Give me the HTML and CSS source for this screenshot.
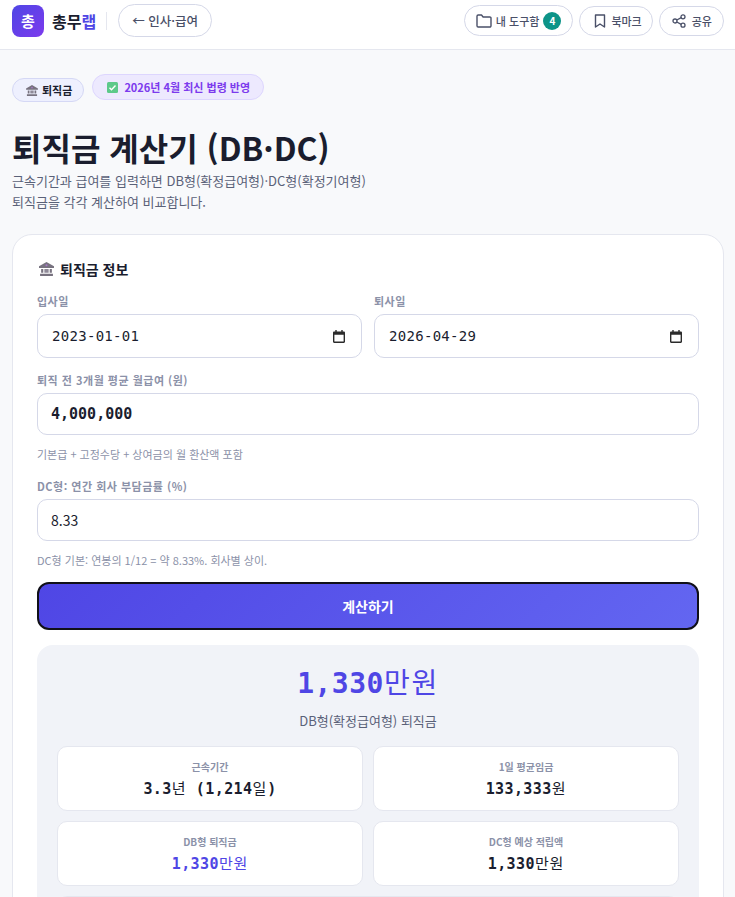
FILE: index.html
```html
<!DOCTYPE html>
<html lang="ko">
<head>
  <meta charset="UTF-8">
  <title>퇴직금 계산기 (DB·DC)</title>
  <meta name="viewport" content="width=device-width, initial-scale=1.0">
  <link rel="stylesheet" href="styles.css">
</head>
<body>

  <header class="topbar">
    <div class="topbar-left">
      <a class="logo-mark" href="#">총</a>
      <a class="logo-text" href="#">총무<span>랩</span></a>
      <span class="topbar-divider"></span>
      <a class="back-pill" href="#">← 인사·급여</a>
    </div>
    <nav class="topbar-right">
      <a class="tool-pill tool-pill-main" href="#">
        <svg width="16" height="14" viewBox="0 0 16 14" fill="none" stroke="currentColor" stroke-width="1.400" stroke-linejoin="round"><path d="M1 2.200A1.200 1.200 0 0 1 2.200 1h3.300l1.600 2h6.700A1.200 1.200 0 0 1 15 4.200v7.600a1.200 1.200 0 0 1-1.200 1.200H2.200A1.200 1.200 0 0 1 1 11.800z"/></svg>
        내 도구함 <span class="count">4</span>
      </a>
      <a class="tool-pill tool-pill-mark" href="#">
        <svg width="12" height="14" viewBox="0 0 12 14" fill="none" stroke="currentColor" stroke-width="1.400" stroke-linejoin="round"><path d="M1.500 1h9v12L6 10l-4.500 3z"/></svg>
        북마크
      </a>
      <a class="tool-pill tool-pill-share" href="#">
        <svg width="14" height="14" viewBox="0 0 14 14" fill="none" stroke="currentColor" stroke-width="1.300"><circle cx="11" cy="2.800" r="2"/><circle cx="3" cy="7" r="2"/><circle cx="11" cy="11.200" r="2"/><path d="M4.800 6l4.400-2.300M4.800 8l4.400 2.300"/></svg>
        공유
      </a>
    </nav>
  </header>

  <main class="page">
    <div class="badges">
      <span class="badge badge-cat">
        <svg width="12" height="11" viewBox="0 0 14 13"><path fill="#77727f" d="M7 0l7 4v1.500H0V4zM1 11h12v2H1zM2 6.500h2V10H2zM10 6.500h2V10h-2z"/><path fill="#8f8a98" d="M5 6.500h4V10H5z"/><circle cx="7" cy="3" r="1" fill="#a678c8"/></svg>
        퇴직금
      </span>
      <span class="badge badge-law">
        <svg width="11" height="11" viewBox="0 0 11 11"><rect width="11" height="11" rx="1.500" fill="#5cc98a"/><path d="M2.500 5.700l2 2 4-4.200" fill="none" stroke="#fff" stroke-width="1.400"/></svg>
        2026년 4월 최신 법령 반영
      </span>
    </div>

    <h1>퇴직금 계산기 (DB·DC)</h1>
    <p class="lead">근속기간과 급여를 입력하면 DB형(확정급여형)·DC형(확정기여형) 퇴직금을 각각 계산하여 비교합니다.</p>

    <section class="card">
      <h2>
        <svg width="15" height="14" viewBox="0 0 14 13"><path fill="#77727f" d="M7 0l7 4v1.500H0V4zM1 11h12v2H1zM2 6.500h2V10H2zM10 6.500h2V10h-2z"/><path fill="#8f8a98" d="M5 6.500h4V10H5z"/><circle cx="7" cy="3" r="1" fill="#a678c8"/></svg>
        퇴직금 정보
      </h2>

      <div class="date-row">
        <div class="field">
          <label for="startDate">입사일</label>
          <div class="input date-box">
            <input type="text" id="startDate" class="date-text" value="2023-01-01">
            <svg width="12" height="13" viewBox="0.500 0 13 14"><path fill="#2b2b2b" d="M3 0h1.500v1.500h5V0H11v1.500h1.200c.7 0 1.300.6 1.300 1.300v9.900c0 .7-.6 1.300-1.300 1.300H1.800C1.100 14 .5 13.400 .5 12.700V2.800c0-.7.6-1.300 1.300-1.300H3zM2 5v7.500h10V5z"/></svg>
          </div>
        </div>
        <div class="field">
          <label for="endDate">퇴사일</label>
          <div class="input date-box">
            <input type="text" id="endDate" class="date-text" value="2026-04-29">
            <svg width="12" height="13" viewBox="0.500 0 13 14"><path fill="#2b2b2b" d="M3 0h1.500v1.500h5V0H11v1.500h1.200c.7 0 1.300.6 1.300 1.300v9.900c0 .7-.6 1.300-1.300 1.300H1.800C1.100 14 .5 13.400 .5 12.700V2.800c0-.7.6-1.300 1.300-1.300H3zM2 5v7.500h10V5z"/></svg>
          </div>
        </div>
      </div>

      <div class="field field-spaced">
        <label for="salary">퇴직 전 3개월 평균 월급여 (원)</label>
        <input type="text" id="salary" class="input input-money" value="4,000,000">
        <p class="hint">기본급 + 고정수당 + 상여금의 월 환산액 포함</p>
      </div>

      <div class="field field-spaced">
        <label for="rate">DC형: 연간 회사 부담금률 (%)</label>
        <input type="text" id="rate" class="input input-rate" value="8.33">
        <p class="hint">DC형 기본: 연봉의 1/12 = 약 8.33%. 회사별 상이.</p>
      </div>

      <button type="button" class="calc-button">계산하기</button>

      <div class="result">
        <div class="result-amount">1,330<span class="unit">만원</span></div>
        <div class="result-label">DB형(확정급여형) 퇴직금</div>
        <div class="stat-grid">
          <div class="stat">
            <div class="stat-label">근속기간</div>
            <div class="stat-value">3.3<span class="unit">년</span> (1,214<span class="unit">일</span>)</div>
          </div>
          <div class="stat">
            <div class="stat-label">1일 평균임금</div>
            <div class="stat-value">133,333<span class="unit">원</span></div>
          </div>
          <div class="stat">
            <div class="stat-label">DB형 퇴직금</div>
            <div class="stat-value stat-accent">1,330<span class="unit">만원</span></div>
          </div>
          <div class="stat">
            <div class="stat-label">DC형 예상 적립액</div>
            <div class="stat-value">1,330<span class="unit">만원</span></div>
          </div>
        </div>
        <div class="stat stat-wide"></div>
      </div>
    </section>
  </main>

</body>
</html>
```

FILE: styles.css
```css
* {
  box-sizing: border-box;
}
html, body {
  height: 100%;
  margin: 0;
  overflow: hidden;
}
body {
  font-family: 'Noto Sans CJK KR', 'Noto Sans', sans-serif;
  background: #f8f9fb;
  color: #1a1d2e;
}
a {
  text-decoration: none;
  color: inherit;
}
.topbar {
  height: 50px;
  padding: 4px 11px 0 12px;
  background: #fff;
  border-bottom: 1px solid #e5e7ef;
  display: flex;
  justify-content: space-between;
  align-items: flex-start;
}
.topbar-left, .topbar-right {
  display: flex;
  align-items: center;
}
.topbar-right {
  gap: 6px;
  margin-top: 1px;
}
.logo-mark {
  width: 32px;
  height: 32px;
  border-radius: 8px;
  background: linear-gradient(135deg, #4f46e5, #7c3aed);
  color: #fff;
  font-size: 15px;
  font-weight: 700;
  display: flex;
  align-items: center;
  justify-content: center;
}
.logo-text {
  margin-left: 8px;
  font-size: 16px;
  font-weight: 700;
}
.logo-text span {
  color: #4f46e5;
}
.topbar-divider {
  width: 1px;
  height: 18px;
  margin: 0 11px 0 10px;
  background: #e5e7ef;
}
.back-pill {
  height: 33px;
  padding: 0 13px;
  border: 1px solid #d5d8e8;
  border-radius: 17px;
  font-size: 12.500px;
  font-weight: 500;
  color: #4a5068;
  display: flex;
  align-items: center;
}
.tool-pill {
  height: 30px;
  padding: 0 12px;
  border: 1px solid #d5d8e8;
  border-radius: 16px;
  font-size: 11px;
  font-weight: 500;
  color: #4a5068;
  display: flex;
  align-items: center;
  gap: 5px;
}
.tool-pill-main {
  height: 31px;
  padding: 0 11px;
  gap: 4px;
}
.tool-pill-mark {
  padding: 0 10px 0 14px;
}
.tool-pill-share {
  padding: 0 11px 0 12px;
  gap: 6px;
}
.count {
  width: 18px;
  height: 18px;
  border-radius: 50%;
  background: #0d9488;
  color: #fff;
  font-size: 10px;
  font-weight: 700;
  display: flex;
  align-items: center;
  justify-content: center;
}
.page {
  padding: 24px 11px 0 12px;
}
.badges {
  display: flex;
  align-items: flex-start;
  gap: 8px;
}
.badge {
  border-radius: 14px;
  font-size: 11px;
  font-weight: 700;
  display: inline-flex;
  align-items: center;
}
.badge-cat {
  height: 24px;
  margin-top: 4px;
  padding: 0 11px 0 13px;
  gap: 4px;
  background: #eef0fe;
  border: 1px solid #d5d8f5;
}
.badge-law {
  height: 26px;
  padding: 0 13px 0 14px;
  gap: 6px;
  background: #ede9fe;
  border: 1px solid #ddd6fe;
  color: #7c3aed;
}
h1 {
  margin: 23px 0 0;
  font-size: 32px;
  line-height: 44px;
  font-weight: 700;
}
.lead {
  width: 370px;
  margin: 1px 0 0;
  font-size: 13px;
  line-height: 21px;
  color: #5a6178;
  word-break: keep-all;
}
.card {
  margin-top: 22px;
  padding: 23px 24px 24px;
  background: #fff;
  border: 1px solid #e5e7ef;
  border-radius: 20px;
}
h2 {
  margin: 0 0 13px 2px;
  font-size: 14px;
  line-height: 22px;
  font-weight: 700;
  display: flex;
  align-items: center;
  gap: 6px;
}
.date-row {
  display: grid;
  grid-template-columns: 1fr 1fr;
  gap: 12px;
}
.field label {
  display: block;
  margin-bottom: 5px;
  font-size: 11px;
  line-height: 16px;
  font-weight: 700;
  letter-spacing: 0.5px;
  color: #8b91a8;
}
.field-spaced {
  margin-top: 14px;
}
.field-spaced + .field-spaced {
  margin-top: 16px;
}
.input {
  display: block;
  width: 100%;
  border: 1px solid #d5d8e8;
  border-radius: 10px;
  background: #fff;
  color: #1a1d2e;
  outline: none;
}
.date-box {
  height: 44px;
  padding: 0 16px 0 14px;
  display: flex;
  align-items: center;
  justify-content: space-between;
}
.date-text {
  width: 120px;
  padding: 0;
  border: none;
  outline: none;
  background: none;
  color: #1a1d2e;
  font-family: monospace;
  font-size: 14px;
  letter-spacing: 0.3px;
}
.input-money {
  height: 42px;
  padding: 0 13px;
  font-family: monospace;
  font-size: 15px;
  font-weight: 700;
}
.input-rate {
  height: 42px;
  padding: 0 13px;
  font-family: 'Noto Sans CJK KR', sans-serif;
  font-size: 14px;
}
.hint {
  margin: 12px 0 0;
  font-size: 11px;
  line-height: 15px;
  color: #8b91a8;
}
.calc-button {
  display: block;
  width: 100%;
  height: 48px;
  margin-top: 14px;
  border: 2px solid #101018;
  border-radius: 12px;
  background: linear-gradient(135deg, #4f46e5, #6366f1);
  color: #fff;
  font-family: inherit;
  font-size: 14px;
  font-weight: 700;
}
.result {
  margin-top: 15px;
  padding: 21px 20px 10px;
  background: #f1f3f8;
  border-radius: 16px;
  text-align: center;
}
.result-amount {
  font-family: monospace;
  font-size: 28px;
  line-height: 36px;
  font-weight: 700;
  letter-spacing: 0.5px;
  color: #4f46e5;
}
.unit {
  font-family: 'Noto Sans CJK KR', sans-serif;
  font-weight: 400;
  line-height: 1;
  letter-spacing: 0.06em;
}
.result-label {
  margin-top: 9px;
  font-size: 13px;
  line-height: 20px;
  color: #5a6178;
}
.stat-grid {
  margin-top: 15px;
  display: grid;
  grid-template-columns: 1fr 1fr;
  gap: 10px;
}
.stat {
  height: 65px;
  padding-top: 13px;
  background: #fff;
  border: 1px solid #e5e7ef;
  border-radius: 10px;
}
.stat-wide {
  margin-top: 10px;
}
.stat-label {
  font-size: 10px;
  line-height: 14px;
  font-weight: 700;
  color: #8b91a8;
}
.stat-value {
  margin-top: 4px;
  font-family: monospace;
  font-size: 15px;
  line-height: 22px;
  font-weight: 700;
  letter-spacing: 0.4px;
}
.stat-accent {
  color: #4f46e5;
}
```
